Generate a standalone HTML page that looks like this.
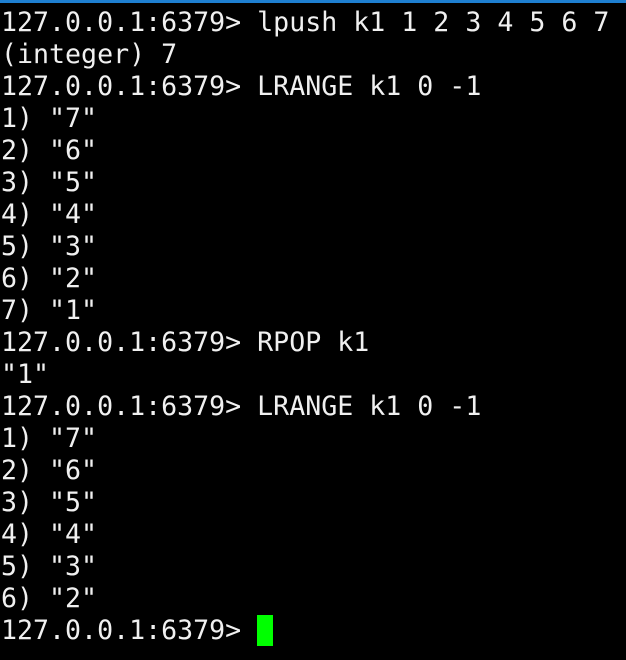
<!DOCTYPE html>
<html><head><meta charset="utf-8"><style>
html,body{margin:0;padding:0;background:#000;width:626px;height:660px;overflow:hidden}
.bar{position:absolute;left:0;top:0;width:626px;height:3px;background:#1e7fd0}
pre{position:absolute;left:1px;top:7px;margin:0;font-family:"DejaVu Sans Mono",monospace;font-size:26.6px;line-height:32px;color:#f0f0f0;white-space:pre}
.cur{display:inline-block;width:16px;height:31px;background:#00ff00;vertical-align:-7px}
</style></head><body><div class="bar"></div><pre>127.0.0.1:6379&gt; lpush k1 1 2 3 4 5 6 7
(integer) 7
127.0.0.1:6379&gt; LRANGE k1 0 -1
1) "7"
2) "6"
3) "5"
4) "4"
5) "3"
6) "2"
7) "1"
127.0.0.1:6379&gt; RPOP k1
"1"
127.0.0.1:6379&gt; LRANGE k1 0 -1
1) "7"
2) "6"
3) "5"
4) "4"
5) "3"
6) "2"
127.0.0.1:6379&gt; <span class="cur"></span></pre></body></html>
